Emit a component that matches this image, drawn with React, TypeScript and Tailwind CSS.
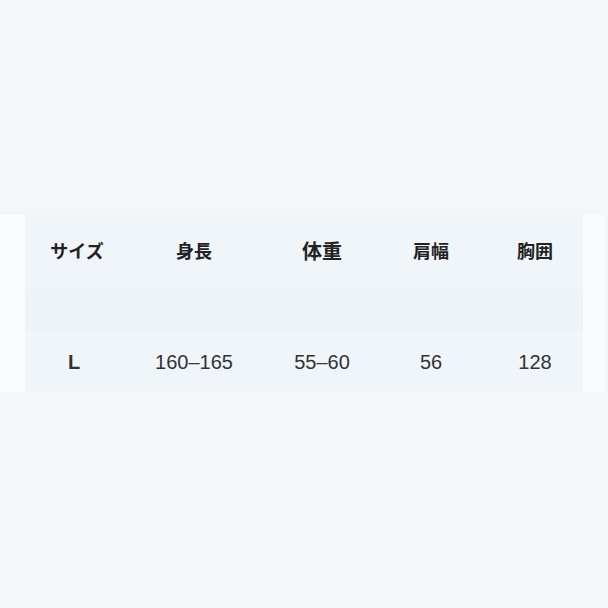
import React from "react";

const cols = [
  { w: "w-[104px]", head: "サイズ", val: "L", big: false },
  { w: "w-[130px]", head: "身長", val: "160–165", big: false },
  { w: "w-[126px]", head: "体重", val: "55–60", big: true },
  { w: "w-[92px]", head: "肩幅", val: "56", big: false },
  { w: "w-[116px]", head: "胸囲", val: "128", big: false },
];

export default function App() {
  return (
    <div
      className="w-[608px] h-[608px] bg-[#f3f7fa] flex flex-col overflow-hidden"
      style={{ fontFamily: '"Liberation Sans", "Noto Sans CJK JP", sans-serif' }}
    >
      <div className="h-[215px]" />
      <div className="flex h-[177px]">
        <div className="w-[25px] bg-[#fafcfd]" />
        <div className="w-[558px] bg-[#f0f5f9] flex flex-col">
          <div className="h-[74px] flex items-center">
            {cols.map((c) => (
              <div
                key={c.head}
                className={`${c.w} shrink-0 text-center font-bold text-[#222222] ${
                  c.big ? "text-[20px]" : "text-[18px]"
                }`}
              >
                {c.head}
              </div>
            ))}
          </div>
          <div className="h-[42px] bg-[#eef3f7]" />
          <div className="h-[61px] flex items-center">
            {cols.map((c, i) => (
              <div
                key={c.val}
                className={`${c.w} shrink-0 text-center text-[20px] text-[#333333] ${
                  i === 0 ? "font-semibold pr-[6px]" : ""
                }`}
              >
                {c.val}
              </div>
            ))}
          </div>
        </div>
        <div className="w-[22px] bg-[#f9fbfc]" />
      </div>
    </div>
  );
}
